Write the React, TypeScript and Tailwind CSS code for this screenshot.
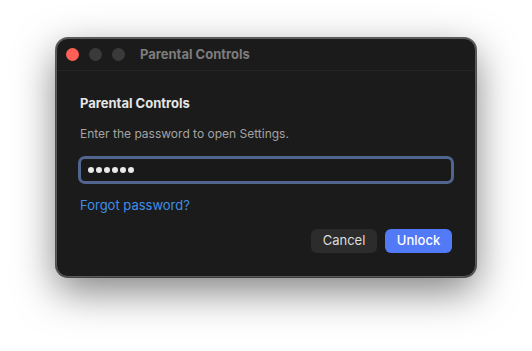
export default function App() {
  return (
    <div className="w-[532px] h-[351px] bg-white flex items-start justify-center pt-[38px] font-['Inter','Liberation_Sans',sans-serif]">
      {/* Window */}
      <div className="w-[420px] h-[239px] rounded-[12px] bg-[#1b1b1b] border border-[#5a5a5a] shadow-[0_14px_40px_rgba(0,0,0,0.5),0_0_0_1px_rgba(0,0,0,0.6)] flex flex-col overflow-hidden">
        {/* Title bar */}
        <div className="h-[32px] flex items-center px-[9px] border-b border-[#252525]">
          <div className="flex items-center gap-[10px]">
            <span className="w-[13px] h-[13px] rounded-full bg-[#fe5f57]" />
            <span className="w-[13px] h-[13px] rounded-full bg-[#3a3a3a]" />
            <span className="w-[13px] h-[13px] rounded-full bg-[#3a3a3a]" />
          </div>
          <span className="ml-[15px] text-[13px] font-bold text-[#7d7d7d]">Parental Controls</span>
        </div>

        {/* Content */}
        <div className="flex flex-col px-[23px] pt-[24px]">
          <h1 className="text-[13px] font-bold text-[#e6e6e6] leading-[16px]">Parental Controls</h1>
          <p className="mt-[15px] text-[12px] text-[#a3a3a3] leading-[16px]">Enter the password to open Settings.</p>
          <div className="mt-[14px] -mx-[2px] h-[28px] rounded-[7px] border-[3px] border-[#52658f] bg-[#191919] flex items-center gap-[2px] px-[7px]">
            {Array.from({ length: 6 }).map((_, i) => (
              <span key={i} className="w-[6px] h-[6px] rounded-full bg-[#e8e8e8]" />
            ))}
          </div>
          <a className="mt-[13px] text-[13px] text-[#3f8fe8] leading-[16px]">Forgot password?</a>
          <div className="mt-[16px] flex justify-end gap-[8px]">
            <button className="w-[66px] h-[24px] rounded-[6px] bg-[#2c2c2c] text-[13px] text-[#dcdcdc]">Cancel</button>
            <button className="w-[67px] h-[24px] rounded-[6px] bg-[#5279f6] text-[13px] text-white font-medium">Unlock</button>
          </div>
        </div>
      </div>
    </div>
  );
}
